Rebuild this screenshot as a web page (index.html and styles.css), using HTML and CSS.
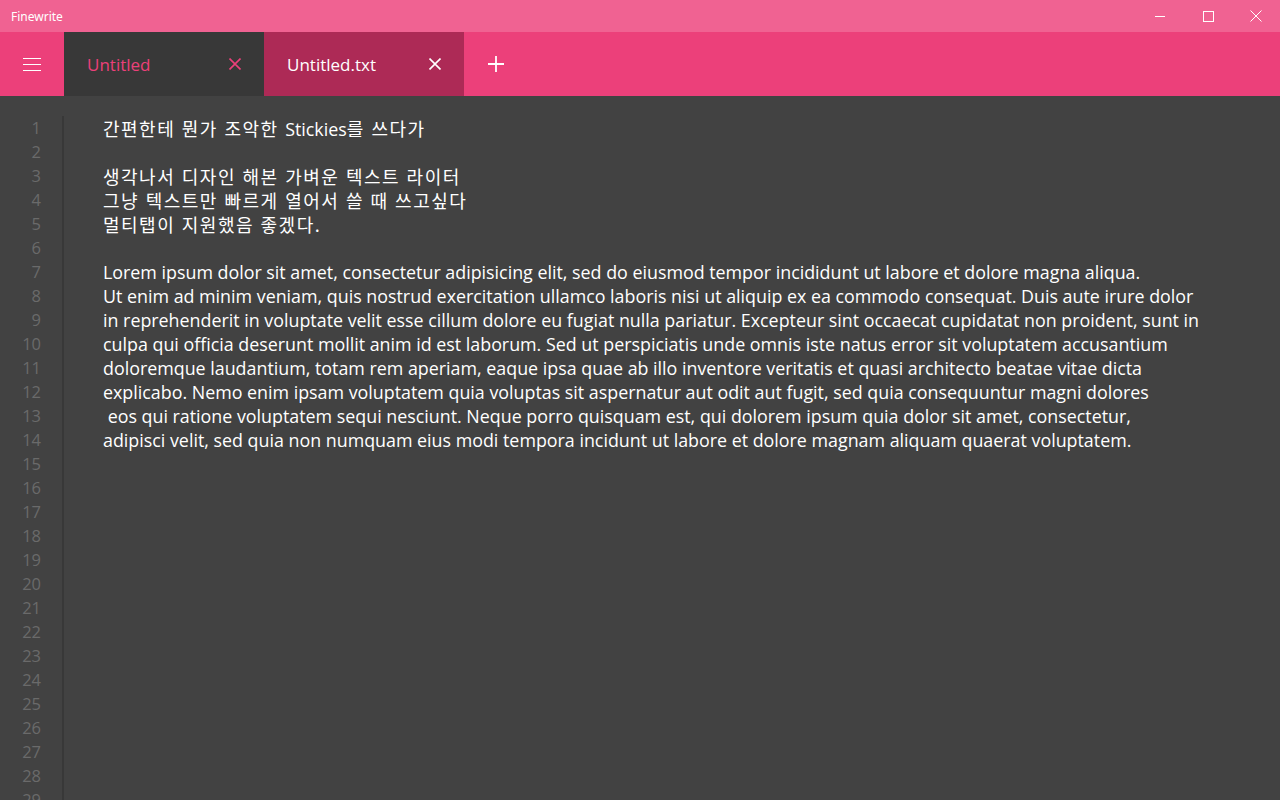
FILE: index.html
```html
<!DOCTYPE html>
<html lang="ko">
<head>
<meta charset="utf-8">
<title>Finewrite</title>
<link rel="stylesheet" href="styles.css">
</head>
<body>
<div class="app">
  <header class="titlebar">
    <span class="app-name">Finewrite</span>
    <div class="win-controls">
      <button class="win-btn" aria-label="Minimize"><svg width="12" height="12" viewBox="0 0 12 12"><path d="M1 6.5h10" stroke="#fff" stroke-width="1"/></svg></button>
      <button class="win-btn" aria-label="Maximize"><svg width="12" height="12" viewBox="0 0 12 12"><rect x="1.5" y="1.5" width="10" height="10" fill="none" stroke="#fff" stroke-width="1"/></svg></button>
      <button class="win-btn" aria-label="Close"><svg width="12" height="12" viewBox="0 0 12 12"><path d="M0.5 0.5l11 11M11.5 0.5l-11 11" stroke="#fff" stroke-width="1"/></svg></button>
    </div>
  </header>
  <nav class="tabbar">
    <button class="menu-btn" aria-label="Menu"><svg width="18" height="14" viewBox="0 0 18 14"><path d="M0 1.5h18M0 7.5h18M0 13.5h18" stroke="#fff" stroke-width="1"/></svg></button>
    <div class="tab tab-active"><span class="tab-label">Untitled</span><svg class="tab-close" width="12" height="12" viewBox="0 0 12 12"><path d="M0.5 0.5l11 11M11.5 0.5l-11 11" stroke="#EC407A" stroke-width="1.6"/></svg></div>
    <div class="tab tab-other"><span class="tab-label">Untitled.txt</span><svg class="tab-close" width="12" height="12" viewBox="0 0 12 12"><path d="M0.5 0.5l11 11M11.5 0.5l-11 11" stroke="#fff" stroke-width="1.6"/></svg></div>
    <button class="add-btn" aria-label="New tab"><svg width="16" height="16" viewBox="0 0 16 16"><path d="M8 0v16M0 8h16" stroke="#fff" stroke-width="1.8"/></svg></button>
  </nav>
  <main class="editor">
    <div class="gutter" id="gutter"></div>
    <div class="text">
<div class="line"><span class="ko">간편한테 뭔가 조악한 </span>Stickies<span class="ko">를 쓰다가</span></div>
<div class="line"> </div>
<div class="line"><span class="ko">생각나서 디자인 해본 가벼운 텍스트 라이터</span></div>
<div class="line"><span class="ko">그냥 텍스트만 빠르게 열어서 쓸 때 쓰고싶다</span></div>
<div class="line"><span class="ko">멀티탭이 지원했음 좋겠다.</span></div>
<div class="line"> </div>
<div class="line">Lorem ipsum dolor sit amet, consectetur adipisicing elit, sed do eiusmod tempor incididunt ut labore et dolore magna aliqua.</div>
<div class="line">Ut enim ad minim veniam, quis nostrud exercitation ullamco laboris nisi ut aliquip ex ea commodo consequat. Duis aute irure dolor</div>
<div class="line">in reprehenderit in voluptate velit esse cillum dolore eu fugiat nulla pariatur. Excepteur sint occaecat cupidatat non proident, sunt in</div>
<div class="line">culpa qui officia deserunt mollit anim id est laborum. Sed ut perspiciatis unde omnis iste natus error sit voluptatem accusantium</div>
<div class="line">doloremque laudantium, totam rem aperiam, eaque ipsa quae ab illo inventore veritatis et quasi architecto beatae vitae dicta</div>
<div class="line">explicabo. Nemo enim ipsam voluptatem quia voluptas sit aspernatur aut odit aut fugit, sed quia consequuntur magni dolores</div>
<div class="line"> eos qui ratione voluptatem sequi nesciunt. Neque porro quisquam est, qui dolorem ipsum quia dolor sit amet, consectetur,</div>
<div class="line">adipisci velit, sed quia non numquam eius modi tempora incidunt ut labore et dolore magnam aliquam quaerat voluptatem.</div>
    </div>
  </main>
</div>
<script>
  var g = document.getElementById('gutter');
  for (var i = 1; i <= 29; i++) {
    var d = document.createElement('div');
    d.className = 'ln';
    d.textContent = i;
    g.appendChild(d);
  }
</script>
</body>
</html>
```
FILE: styles.css
```css
* { box-sizing: border-box; }
html, body { margin: 0; padding: 0; height: 100%; overflow: hidden; }
body { font-family: "Open Sans", "Noto Sans CJK KR", sans-serif; background: #424242; }
.app { display: flex; flex-direction: column; height: 800px; }
button { border: 0; background: none; padding: 0; margin: 0; cursor: default; }

.titlebar { height: 32px; flex: none; background: #F06292; display: flex; align-items: center; justify-content: space-between; }
.app-name { color: #fff; font-family: "Noto Sans", sans-serif; font-size: 12px; padding-left: 11px; }
.win-controls { display: flex; height: 32px; }
.win-btn { width: 48px; height: 32px; display: flex; align-items: center; justify-content: center; }

.tabbar { height: 64px; flex: none; background: #EC407A; display: flex; }
.menu-btn { width: 64px; height: 64px; display: flex; align-items: center; justify-content: center; }
.tab { width: 200px; height: 64px; display: flex; align-items: center; justify-content: space-between; padding: 0 23px 0 23px; }
.tab-label { font-size: 17px; font-family: "Open Sans", sans-serif; }
.tab-active { background: #383838; }
.tab-active .tab-label { color: #EC407A; }
.tab-other { background: #AD2A56; }
.tab-other .tab-label { color: #fff; }
.add-btn { width: 64px; height: 64px; display: flex; align-items: center; justify-content: center; }

.editor { flex: 1; display: flex; padding-top: 20px; min-height: 0; overflow: hidden; }
.gutter { width: 64px; flex: none; border-right: 2px solid #383838; padding-right: 21px; color: #6a6a6a; font-family: "Open Sans", sans-serif; font-size: 16.5px; text-align: right; }
.ln { height: 24px; line-height: 24px; }
.text { padding-left: 39px; color: #fff; font-size: 17.85px; }
.line { height: 24px; line-height: 24px; white-space: pre; }
.ko { font-family: "Noto Sans CJK KR", sans-serif; font-size: 18px; letter-spacing: 1.5px; line-height: 24px; }
```
